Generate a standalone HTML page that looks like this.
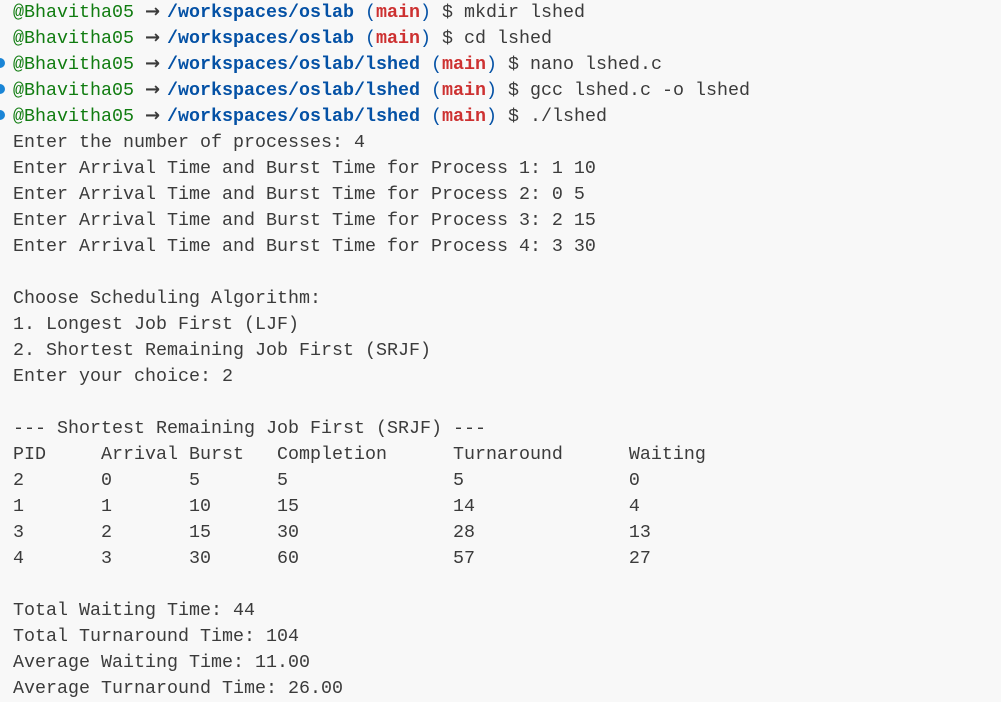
<!DOCTYPE html>
<html><head><style>
html,body{margin:0;padding:0;background:#f8f8f8;width:1001px;height:699px;overflow:hidden}
pre{margin:0;position:absolute;left:13px;top:0px;font-family:"Liberation Mono","DejaVu Sans Mono",monospace;font-size:18.33px;line-height:26px;color:#3b3b3b}
.g{color:#107c10}.b{color:#0451a5;font-weight:bold}.p{color:#0451a5}.r{color:#cd3131;font-weight:bold}
.a{display:inline-block;width:22px;height:18px;line-height:18px;vertical-align:0px;font-family:"DejaVu Sans",sans-serif;font-weight:bold;font-size:18px;color:#3b3b3b}
.dot{position:absolute;left:-5px;width:10px;height:10px;border-radius:50%;background:#1a85d6}
</style></head><body>
<div class="dot" style="top:58px"></div><div class="dot" style="top:84px"></div><div class="dot" style="top:110px"></div>
<pre><span class="g">@Bhavitha05 </span><span class="a">→</span><span class="b">/workspaces/oslab</span> <span class="p">(</span><span class="r">main</span><span class="p">)</span> $ mkdir lshed
<span class="g">@Bhavitha05 </span><span class="a">→</span><span class="b">/workspaces/oslab</span> <span class="p">(</span><span class="r">main</span><span class="p">)</span> $ cd lshed
<span class="g">@Bhavitha05 </span><span class="a">→</span><span class="b">/workspaces/oslab/lshed</span> <span class="p">(</span><span class="r">main</span><span class="p">)</span> $ nano lshed.c
<span class="g">@Bhavitha05 </span><span class="a">→</span><span class="b">/workspaces/oslab/lshed</span> <span class="p">(</span><span class="r">main</span><span class="p">)</span> $ gcc lshed.c -o lshed
<span class="g">@Bhavitha05 </span><span class="a">→</span><span class="b">/workspaces/oslab/lshed</span> <span class="p">(</span><span class="r">main</span><span class="p">)</span> $ ./lshed
Enter the number of processes: 4
Enter Arrival Time and Burst Time for Process 1: 1 10
Enter Arrival Time and Burst Time for Process 2: 0 5
Enter Arrival Time and Burst Time for Process 3: 2 15
Enter Arrival Time and Burst Time for Process 4: 3 30

Choose Scheduling Algorithm:
1. Longest Job First (LJF)
2. Shortest Remaining Job First (SRJF)
Enter your choice: 2

--- Shortest Remaining Job First (SRJF) ---
PID     Arrival Burst   Completion      Turnaround      Waiting
2       0       5       5               5               0
1       1       10      15              14              4
3       2       15      30              28              13
4       3       30      60              57              27

Total Waiting Time: 44
Total Turnaround Time: 104
Average Waiting Time: 11.00
Average Turnaround Time: 26.00</pre>
</body></html>
